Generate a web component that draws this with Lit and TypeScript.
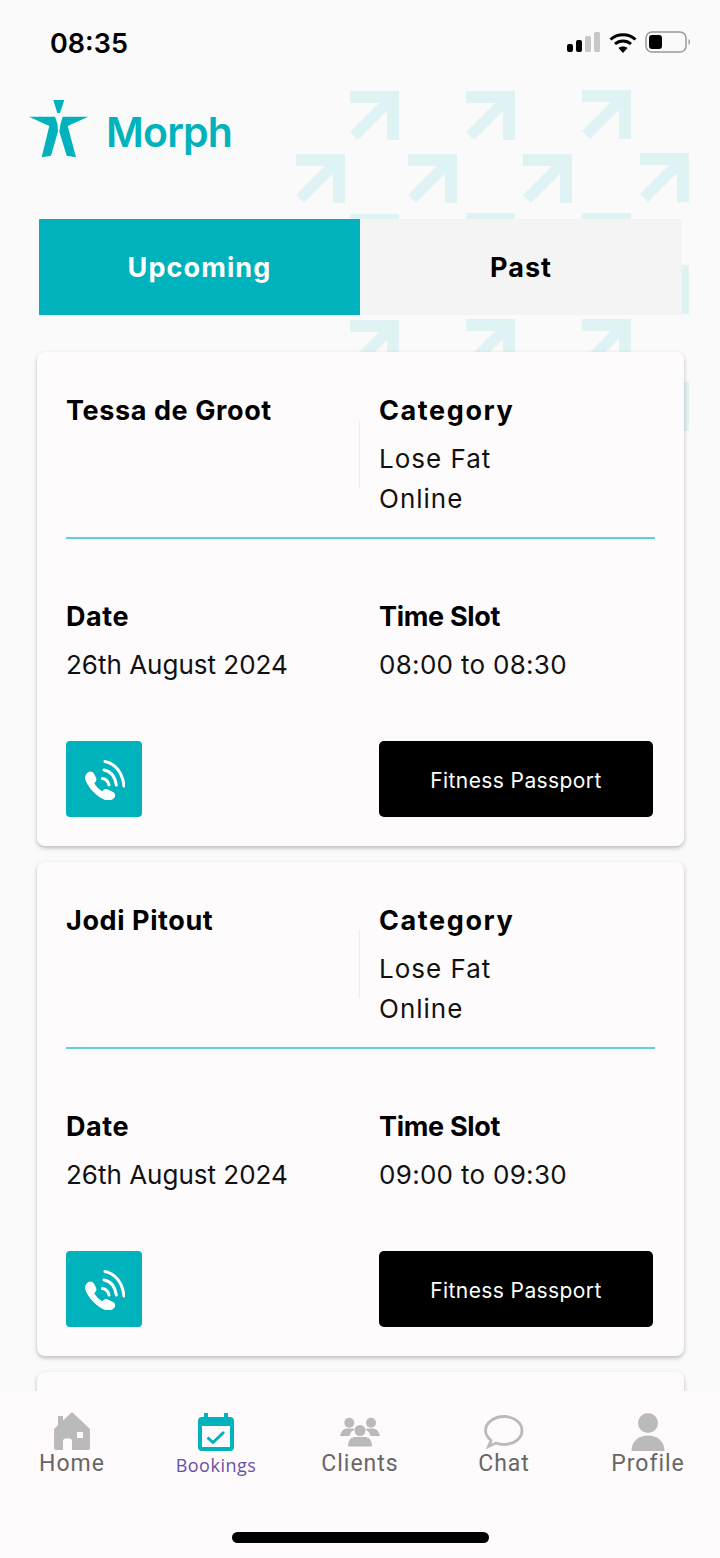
import { LitElement, html, css, svg } from "lit";
import { customElement } from "lit/decorators.js";

const arrows: [number, number][] = [
  [350, 91], [466, 91], [582, 90],
  [296, 154], [408, 154], [523, 154], [640, 153],
  [350, 214], [466, 213], [582, 213],
  [640, 265],
  [350, 320], [466, 319], [582, 319],
  [640, 382],
];

const bookings = [
  { name: "Tessa de Groot", slot: "08:00 to 08:30" },
  { name: "Jodi Pitout", slot: "09:00 to 09:30" },
  { name: "", slot: "" },
];

const phoneIcon = html`<svg class="phone" width="40" height="40" viewBox="0 0 40 40" fill="none">
  <path fill="#fff" stroke="#fff" stroke-width="1.200" stroke-linejoin="round" d="M2 14c2-2.500 5-2.500 6.500 0l2 4c.7 1.500.2 3-1 4l-1 1c2 4 5 7 9 9l1-1.200c1.200-1.200 2.700-1.500 4.200-.8l5 2.500c2 1 2.500 3.500 1 5-2 2-5 3-8 2C13 37 3 27 .8 19c-.4-2 0-3.500 1.200-5z"/>
  <path stroke="#fff" stroke-width="3" stroke-linecap="round" d="M17.500 18.500c3.300.5 5.700 3 6.500 6.500M19 10c6.500 1.200 11 6.500 12.300 15M20 1.500c10 2 17.500 11 19 24.500"/>
</svg>`;

const homeIcon = html`<svg width="38" height="40" viewBox="0 0 38 40"><path fill="#bababa" fill-rule="evenodd" d="M19 0 37 17V36a2 2 0 0 1-2 2H19V29.500a3 3 0 0 0-3-3H13a3 3 0 0 0-3 3V38H3a2 2 0 0 1-2-2V17l4-4V4h5v4.500zM24 20v6h6v-6z"/></svg>`;
const calIcon = html`<svg width="36" height="40" viewBox="0 0 36 40"><path fill="#00b2bb" fill-rule="evenodd" d="M6 1h4v4h16V1h4v4h2a4 4 0 0 1 4 4v26a4 4 0 0 1-4 4H4a4 4 0 0 1-4-4V9a4 4 0 0 1 4-4h2zM4 14v21h28V14z"/><path fill="none" stroke="#00b2bb" stroke-width="3" d="M9.500 25.500l5.500 5L26 20"/></svg>`;
const clientsIcon = html`<svg width="40" height="30" viewBox="0 0 40 30"><g fill="#bababa"><circle cx="9.300" cy="5.700" r="5"/><circle cx="31" cy="5.700" r="5"/><path d="M0 19c1-5 4-7.500 7-7.500h5c1 0 2 .3 3 .8-3 1.500-5 3.700-5.500 6.700z"/><path d="M40 19c-1-5-4-7.500-7-7.500h-5c-1 0-2 .3-3 .8 3 1.500 5 3.700 5.500 6.700z"/><circle cx="20" cy="13.500" r="5.500"/><path d="M8 29.500c0-6 3-9.500 7-9.500h10c4 0 7 3.500 7 9.500z"/></g></svg>`;
const chatIcon = html`<svg width="40" height="34" viewBox="0 0 40 34" fill="none"><path stroke="#bababa" stroke-width="2.800" d="M20 1.500c10 0 18 6.300 18 14s-7.500 14-18 14c-3 0-6-.5-8-1.500l-7.500 3.500L7 25.500C4 22.800 1.500 19.500 1.500 15.500 1.500 7.800 10 1.500 20 1.500z"/></svg>`;
const profileIcon = html`<svg width="36" height="40" viewBox="0 0 36 40"><g fill="#bababa"><circle cx="18" cy="11" r="10"/><path d="M1.500 39c0-9 6-15.500 16.500-15.500S34.500 30 34.500 39z"/></g></svg>`;

@customElement("app-root")
export class AppRoot extends LitElement {
  static styles = css`
    :host { display: block; width: 720px; height: 1558px; }
    * { box-sizing: border-box; }
    .page {
      position: relative; width: 720px; height: 1558px; overflow: hidden;
      background: #fafafa; font-family: "Inter", "Lato", sans-serif; color: #000;
    }
    .pattern { position: absolute; left: 0; top: 0; }
    .content { position: relative; }
    .status { height: 86px; display: flex; justify-content: space-between; padding: 27px 29px 0 50px; }
    .time { font: 600 27px/34px "Inter", sans-serif; color: #000; }
    .status-icons { display: flex; gap: 8px; align-items: center; height: 32px; margin-top: -1px; }
    .brand { display: flex; align-items: center; gap: 16px; height: 84px; padding-left: 28px; }
    .brand-logo { flex: none; }
    .brand-name { font: 600 41px/50px "Inter", sans-serif; color: #00b2bb; letter-spacing: -0.8px; margin-top: 7px; }
    .tabs { display: grid; grid-template-columns: 321px 322px; margin: 49px 0 0 39px; height: 96px; }
    .tab { display: flex; align-items: center; justify-content: center; padding-top: 2px; font: 700 27px/32px "Inter", sans-serif; letter-spacing: 1.1px; }
    .tab.on { background: #00b2bb; color: #fff; }
    .tab.off { background: #f4f4f4; }
    .cards { display: flex; flex-direction: column; gap: 16px; margin: 37px 36px 0 37px; }
    .card {
      height: 494px; background: #fefbfd; border-radius: 8px; padding: 43px 29px 29px;
      box-shadow: 0 2px 4px rgba(0,0,0,.25); display: flex; flex-direction: column; flex: none;
    }
    .row { display: grid; grid-template-columns: 313px 1fr; }
    .top { height: 144px; border-bottom: 2px solid #5fd2d8; }
    .cell { position: relative; }
    .divider { position: absolute; left: -20px; top: 25px; height: 68px; width: 1px; background: #eee; }
    .label { font: 700 27px/32px "Inter", sans-serif; letter-spacing: 0.6px; }
    .label.wide { letter-spacing: 1.6px; }
    .label.tight { letter-spacing: -0.3px; }
    .value { font: 400 26px/40px "Inter", sans-serif; letter-spacing: 1px; color: #111; margin-top: 12px; }
    .value.date { letter-spacing: 0; }
    .value.slot { letter-spacing: 0.3px; }
    .mid { margin-top: 62px; }
    .actions { margin-top: 56px; align-items: stretch; }
    .call { width: 76px; height: 76px; background: #00b2bb; border-radius: 4px; display: flex; align-items: center; justify-content: center; }
    .phone { margin: 1px 0 0 1px; }
    .passport { height: 76px; width: 274px; padding-top: 3px; background: #000; color: #fff; border-radius: 5px; display: flex; align-items: center; justify-content: center; font: 400 21px/28px "Inter", sans-serif; letter-spacing: 0.4px; }
    .nav { position: absolute; left: 0; right: 0; bottom: 0; height: 167px; background: #fffbfd; }
    .nav-items { display: grid; grid-template-columns: repeat(5, 144px); }
    .nav-item { display: flex; flex-direction: column; align-items: center; padding-top: 21px; }
    .icon { height: 39px; flex: none; display: flex; align-items: center; }
    .nav-label { font: 400 23px/28px "Roboto", sans-serif; color: #666; letter-spacing: 1px; margin-top: -1px; }
    .nav-item.active .nav-label { font: 400 18px/24px "Open Sans", sans-serif; letter-spacing: 0.5px; color: #6750a4; margin-top: 2px; }
    .home { position: absolute; left: 232px; bottom: 15px; width: 257px; height: 11px; border-radius: 6px; background: #000; }
  `;

  render() {
    return html`<div class="page">
      <svg class="pattern" width="720" height="440" viewBox="0 0 720 440" fill="#dff3f5">
        ${arrows.map(([x, y]) => svg`<path transform="translate(${x} ${y})" d="M0 0H49V49H37V20L8 49 0 41 29 12H0z"/>`)}
      </svg>
      <div class="content">
        <div class="status">
          <span class="time">08:35</span>
          <div class="status-icons">
            <svg width="34" height="22" viewBox="0 0 34 22"><g><rect x="0" y="13" width="6" height="8" rx="2"/><rect x="9" y="9" width="6" height="12" rx="2"/><rect x="18" y="5" width="6" height="16" rx="1.500" fill="#c8c8c8"/><rect x="27" y="1" width="6" height="20" rx="1.500" fill="#c8c8c8"/></g></svg>
            <svg width="28" height="21" viewBox="0 0 28 21" fill="none"><path stroke="#000" stroke-width="3" d="M1.500 7.500c7-6.500 18-6.500 25 0M6 12c4.500-4 11.500-4 16 0"/><path d="M14 21l-4.500-5c2.500-2 6.500-2 9 0z" fill="#000"/></svg>
            <svg width="46" height="22" viewBox="0 0 46 22"><rect x="1" y="1" width="40" height="20" rx="6" fill="none" stroke="#999" stroke-width="1.500"/><rect x="4" y="4" width="13" height="14" rx="3"/><path d="M43.500 8c2 .6 2 5.400 0 6z" fill="#999"/></svg>
          </div>
        </div>
        <div class="brand">
          <svg class="brand-logo" width="62" height="60" viewBox="28 98 62 60" fill="#00b2bb">
            <path d="M53.300 100H64.300L60 113H57.300z"/>
            <path d="M29 116.700H55L57.500 124 58 131.500 51 155.700 41.700 157.300 49.300 126z"/>
            <path d="M88.300 116.700H62.700L60.500 124 59.300 131.500 66.700 155.700 76 157.300 67.700 126z"/>
          </svg>
          <span class="brand-name">Morph</span>
        </div>
        <div class="tabs"><div class="tab on">Upcoming</div><div class="tab off">Past</div></div>
        <div class="cards">
          ${bookings.map((b) => html`<div class="card">
            ${b.name ? html`
            <div class="row top">
              <div class="label">${b.name}</div>
              <div class="cell"><div class="divider"></div><div class="label wide">Category</div><div class="value">Lose Fat<br />Online</div></div>
            </div>
            <div class="row mid">
              <div><div class="label">Date</div><div class="value date">26th August 2024</div></div>
              <div><div class="label tight">Time Slot</div><div class="value slot">${b.slot}</div></div>
            </div>
            <div class="row actions">
              <div class="call">${phoneIcon}</div>
              <div class="passport">Fitness Passport</div>
            </div>` : ""}
          </div>`)}
        </div>
      </div>
      <nav class="nav">
        <div class="nav-items">
          <div class="nav-item"><div class="icon">${homeIcon}</div><span class="nav-label">Home</span></div>
          <div class="nav-item active"><div class="icon">${calIcon}</div><span class="nav-label">Bookings</span></div>
          <div class="nav-item"><div class="icon">${clientsIcon}</div><span class="nav-label">Clients</span></div>
          <div class="nav-item"><div class="icon">${chatIcon}</div><span class="nav-label">Chat</span></div>
          <div class="nav-item"><div class="icon">${profileIcon}</div><span class="nav-label">Profile</span></div>
        </div>
        <div class="home"></div>
      </nav>
    </div>`;
  }
}
